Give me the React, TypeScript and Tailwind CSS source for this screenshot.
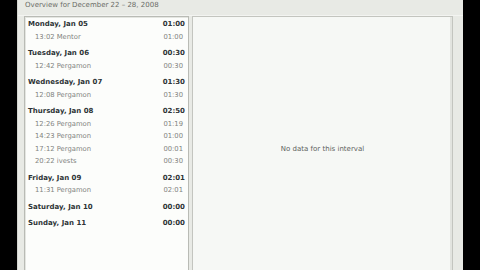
const days = [
  { day: "Monday, Jan 05", total: "01:00", items: [{ label: "13:02 Mentor", time: "01:00" }] },
  { day: "Tuesday, Jan 06", total: "00:30", items: [{ label: "12:42 Pergamon", time: "00:30" }] },
  { day: "Wednesday, Jan 07", total: "01:30", items: [{ label: "12:08 Pergamon", time: "01:30" }] },
  {
    day: "Thursday, Jan 08",
    total: "02:50",
    items: [
      { label: "12:26 Pergamon", time: "01:19" },
      { label: "14:23 Pergamon", time: "01:00" },
      { label: "17:12 Pergamon", time: "00:01" },
      { label: "20:22 ivests", time: "00:30" },
    ],
  },
  { day: "Friday, Jan 09", total: "02:01", items: [{ label: "11:31 Pergamon", time: "02:01" }] },
  { day: "Saturday, Jan 10", total: "00:00", items: [] },
  { day: "Sunday, Jan 11", total: "00:00", items: [] },
];

export default function App() {
  return (
    <div
      className="flex h-[270px] w-[480px] overflow-hidden bg-black"
      style={{ fontFamily: '"DejaVu Sans", Verdana, sans-serif' }}
    >
      <div className="ml-[17px] flex w-[446px] flex-col border-l border-[#d3d5cf] bg-[#e8eae5]">
        <div className="h-[16px] shrink-0 border-b border-[#f3f4f1] pl-[7px] text-[7px] leading-[10px] text-[#6a6c67]">
          Overview for December 22 – 28, 2008
        </div>
        <div className="flex h-[266px] shrink-0 gap-[3px] pl-[6px] pr-[10px]">
          <div className="w-[165px] border border-[#b9bbb5] bg-[#fcfdfb] pt-[1px] shadow-[inset_1px_1px_0_#e4e6e1]">
            {days.map((d, i) => (
              <div key={d.day}>
                <div
                  className={`flex h-[12.5px] items-center justify-between pl-[3px] pr-[3px] text-[7px] font-bold text-[#2e3436] ${
                    i === 0 ? "" : "mt-[4px]"
                  }`}
                >
                  <span>{d.day}</span>
                  <span>{d.total}</span>
                </div>
                {d.items.map((it) => (
                  <div
                    key={it.label}
                    className="flex h-[12.5px] items-center justify-between pl-[10px] pr-[5px] text-[6.8px] text-[#82847f]"
                  >
                    <span>{it.label}</span>
                    <span>{it.time}</span>
                  </div>
                ))}
              </div>
            ))}
          </div>
          <div className="flex flex-1 items-center justify-center border border-[#c3c5bf] bg-[#f6f8f5] text-[7px] text-[#60625d] shadow-[inset_-2px_0_0_#e2e4df]">
            No data for this interval
          </div>
        </div>
      </div>
    </div>
  );
}
